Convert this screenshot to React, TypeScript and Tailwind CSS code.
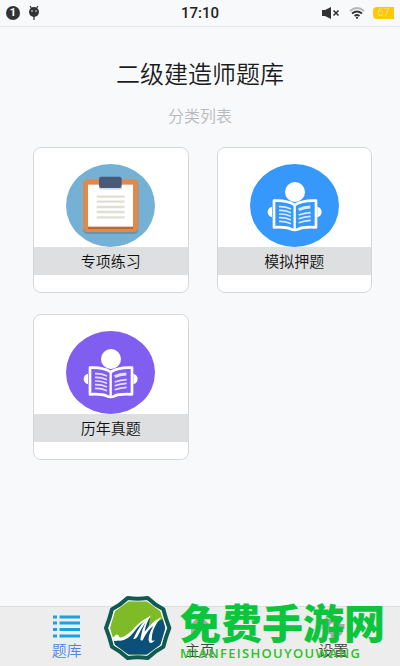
import type { ReactNode } from "react"

interface Category {
  id: string
  title: string
  icon: ReactNode
}

function ClipboardIcon() {
  return (
    <svg viewBox="125 72 267 249" preserveAspectRatio="none" className="h-[83px] w-[89px]" aria-hidden="true">
      <ellipse cx="258.500" cy="196.500" rx="133.500" ry="124.500" fill="#74b1d5" />
      <rect x="176" y="121" width="166" height="161" rx="14" fill="#6a94ab" />
      <rect x="176" y="118" width="166" height="158" rx="14" fill="#df8a4b" />
      <rect x="191" y="134" width="135" height="127" fill="#fff" />
      <rect x="191" y="260" width="135" height="7" fill="#b9683c" />
      <rect x="225" y="140" width="68" height="9" rx="4" fill="#d9dcdf" />
      <path d="M231 110h54q7 0 7 7v21q0 6-6 6h-56q-6 0-6-6v-21q0-7 7-7z" fill="#48597a" />
      <path d="M217 170h84M217 185h84M217 201h84M217 216h84M217 232h84" stroke="#dfe0d2" strokeWidth="7" />
    </svg>
  )
}

function ReaderIcon({ color }: { color: string }) {
  return (
    <svg viewBox="120 72 267 249" preserveAspectRatio="none" className="h-[83px] w-[89px]" aria-hidden="true">
      <ellipse cx="253.500" cy="196.500" rx="133.500" ry="124.500" fill={color} />
      <circle cx="255" cy="156" r="30" fill="#fff" />
      <path d="M186 200q-13 4-13 16t13 16zM322 200q13 4 13 16t-13 16z" fill="#fff" />
      <path
        d="M192 182q40-2 62 13 24-15 64-13v80q-40-2-52 5-12 6-24 0-14-7-50-5z"
        fill={color}
        stroke="#fff"
        strokeWidth="8"
        strokeLinejoin="round"
      />
      <path d="M254 195v72" stroke="#fff" strokeWidth="7" />
      <g stroke="#fff" strokeWidth="5" opacity="0.8" fill="none">
        <path d="M207 200q18-1 36 7M207 211q18-1 36 7M207 222q18-1 36 7M207 233q18-1 36 7M207 244q18-1 36 7" />
        <path d="M266 225q18-6 36-7M266 236q18-6 36-7M266 248q18-6 36-7" />
        <path d="M266 209q16-7 35-8" strokeWidth="9" />
      </g>
    </svg>
  )
}

function DroidIcon() {
  return (
    <svg viewBox="0 0 12 16" className="h-4 w-3" aria-hidden="true">
      <path d="M2 1l2 3M10 1L8 4M6 10v5" stroke="#333" strokeWidth="1.200" />
      <circle cx="6" cy="7" r="5" fill="#333" />
      <circle cx="4" cy="6" r="1" fill="#aaa" />
      <circle cx="8" cy="6" r="1" fill="#aaa" />
    </svg>
  )
}

function MuteIcon() {
  return (
    <svg viewBox="0 0 20 14" className="h-3.5 w-5" aria-hidden="true">
      <path d="M1 4h3l6-3v12l-6-3H1z" fill="#333" />
      <path d="M12.500 4.500l5 5M17.500 4.500l-5 5" stroke="#333" strokeWidth="1.600" />
    </svg>
  )
}

function WifiIcon() {
  return (
    <svg viewBox="0 0 16 12" className="h-3 w-4" fill="none" strokeWidth="1.800" aria-hidden="true">
      <path d="M1 4q7-6 14 0" stroke="#b5b7ba" />
      <path d="M3 6.500q5-4 10 0M5.500 9q2.500-2 5 0" stroke="#333" />
      <circle cx="8" cy="10.800" r="1.100" fill="#333" />
    </svg>
  )
}

function ListIcon() {
  return (
    <svg viewBox="0 0 27 23" className="h-[23px] w-[27px]" stroke="#1ba0e2" strokeWidth="3" aria-hidden="true">
      <path d="M0 2h4M0 8h4M0 14.500h4M0 21h4M6.500 2H27M6.500 8H27M6.500 14.500H27M6.500 21H27" />
    </svg>
  )
}

function HomeIcon() {
  return (
    <svg viewBox="0 0 24 23" className="h-[23px] w-6" fill="#a9a9ab" aria-hidden="true">
      <path d="M12 0l12 12h-3v11h-6v-7H9v7H3V12H0z" />
    </svg>
  )
}

function GearIcon() {
  return (
    <svg viewBox="0 0 24 24" className="h-[23px] w-6" aria-hidden="true">
      <g stroke="#a9a9ab" strokeWidth="5">
        <path d="M12 0v24M0 12h24M3.500 3.500l17 17M20.500 3.500l-17 17" />
      </g>
      <circle cx="12" cy="12" r="8.500" fill="#a9a9ab" />
      <circle cx="12" cy="12" r="3.500" fill="#ededee" />
    </svg>
  )
}

function BrandLogo() {
  return (
    <svg viewBox="12 12 204 198" className="h-[66px] w-[68px] shrink-0" aria-hidden="true">
      <defs>
        <clipPath id="badge">
          <path d="M196 111l-15 50-41 30H86l-41-30-15-50 15-50 41-30h54l41 30z" />
        </clipPath>
      </defs>
      <path
        d="M208 111q-11 28-18 56-25 13-47 34-30-4-60 0-22-21-47-34-7-28-18-56 11-28 18-56 25-13 47-34 30 4 60 0 22 21 47 34 7 28 18 56z"
        fill="#fff"
        stroke="#0f5b51"
        strokeWidth="12"
        strokeLinejoin="round"
      />
      <g clipPath="url(#badge)">
        <path d="M20 20h190v190H20z" fill="#7fba27" />
        <path d="M20 150q50 4 72-22 24-28 58-46l-6 34q20-24 60-38v140H20z" fill="#0b5078" />
        <g fill="#fff">
          <path d="M26 128q10 14 18 8 4-8 11-4 0 10 12 6 20-8 36-28 20-22 50-36-34 24-52 50-18 24-40 25-20-2-37 8z" />
          <path d="M153 72q-16 26-19 50 22-30 50-44-30 36-29 68 2 6 10 0-8 14-17 8-8-14 12-50-20 16-32 44-6 2-7-4 4-28 16-50-14 20-24 42-6 10-13 7 20-46 53-71z" />
        </g>
      </g>
    </svg>
  )
}

const categories: Category[] = [
  { id: "practice", title: "专项练习", icon: <ClipboardIcon /> },
  { id: "mock", title: "模拟押题", icon: <ReaderIcon color="#3798fb" /> },
  { id: "past", title: "历年真题", icon: <ReaderIcon color="#805ef0" /> },
]

const tabs = [
  { id: "bank", label: "题库", icon: <ListIcon />, active: true },
  { id: "home", label: "主页", icon: <HomeIcon />, active: false },
  { id: "settings", label: "设置", icon: <GearIcon />, active: false },
]

function StatusBar() {
  return (
    <header className="grid h-[27px] grid-cols-3 items-center border-b border-[#e6e7ea] px-1.5 font-[Roboto,sans-serif]">
      <div className="flex items-center gap-2">
        <span className="flex size-3.5 items-center justify-center rounded-full bg-[#333] text-[11px] font-bold text-white">1</span>
        <DroidIcon />
      </div>
      <time className="text-center text-[15px] font-medium text-[#222]">17:10</time>
      <div className="flex items-center justify-end gap-2">
        <MuteIcon />
        <WifiIcon />
        <span className="flex h-3 w-[21px] items-center justify-center rounded-l-sm bg-[#fdc70c] text-[11px] text-[#ffe68a]">67</span>
      </div>
    </header>
  )
}

function CategoryCard({ title, icon }: Omit<Category, "id">) {
  return (
    <button type="button" className="flex flex-col items-center rounded-lg border border-[#d6d7d9] bg-white pt-4 pb-[17px]">
      {icon}
      <span className="w-full bg-[#dedfe1] text-[15px] leading-7 text-[#111]">{title}</span>
    </button>
  )
}

export default function App() {
  return (
    <div className="flex min-h-screen flex-col bg-[#f8f9fb] font-['Noto_Sans_CJK_SC',sans-serif] font-[350]">
      <StatusBar />
      <main className="flex-1 pb-6">
        <h1 className="mt-7 text-center text-2xl leading-9 font-[350] text-[#1c1c1e]">二级建造师题库</h1>
        <p className="mt-3 text-center text-base leading-6 text-[#b8b9bb]">分类列表</p>
        <div className="mt-5 grid grid-cols-2 gap-x-7 gap-y-[21px] pr-7 pl-[33px]">
          {categories.map((item) => (
            <CategoryCard key={item.id} title={item.title} icon={item.icon} />
          ))}
        </div>
      </main>
      <nav className="relative border-t border-[#dcdddf] bg-[#ededed]">
        <div className="grid grid-cols-3">
          {tabs.map((tab) => (
            <button key={tab.id} type="button" className="flex flex-col items-center pt-2 pb-1">
              {tab.icon}
              <span className={tab.active ? "text-[15px] leading-6 text-[#4a86e8]" : "text-[15px] leading-6 text-[#444]"}>
                {tab.label}
              </span>
            </button>
          ))}
        </div>
        <div className="pointer-events-none absolute bottom-[5px] left-[104px] flex items-end gap-2">
          <BrandLogo />
          <div className="whitespace-nowrap">
            <p className="text-[41px] leading-[48px] font-black text-[#0bc63c]">免费手游网</p>
            <p className="font-['Open_Sans',sans-serif] text-[13px] leading-4 font-semibold tracking-widest text-[#2fbf2c]">
              MIANFEISHOUYOUWANG
            </p>
          </div>
        </div>
      </nav>
    </div>
  )
}
